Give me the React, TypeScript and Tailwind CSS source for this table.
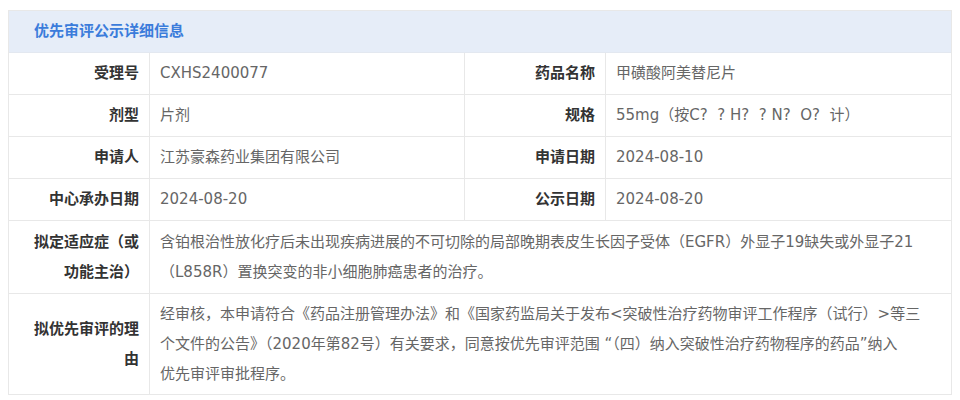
import type { ReactNode } from 'react'

const font = { fontFamily: '"DejaVu Sans", "Noto Sans CJK SC", sans-serif' }

function Label({ children, last, tall }: { children: ReactNode; last?: boolean; tall?: boolean }) {
  return (
    <div
      className={`flex items-center justify-end border-r border-[#e8e8e8] pl-[16px] pr-[10px] text-right text-[15px] font-bold text-[#333] ${tall ? 'leading-[30px]' : 'leading-[29px]'} ${last ? 'py-[5px]' : 'border-b py-[6px]'}`}
    >
      <span>{children}</span>
    </div>
  )
}

function Value({ children, wide, edge, last, tall }: { children: ReactNode; wide?: boolean; edge?: boolean; last?: boolean; tall?: boolean }) {
  return (
    <div
      className={`flex items-center border-[#e8e8e8] px-[10px] text-[15px] text-[#666] ${tall ? 'leading-[30px]' : 'leading-[29px]'} ${wide ? 'col-span-3' : ''} ${edge ? '' : 'border-r'} ${last ? 'py-[5px]' : 'border-b py-[6px]'}`}
    >
      <span>{children}</span>
    </div>
  )
}

export default function App() {
  return (
    <div className="min-h-[400px] bg-white pl-[8px] pt-[10px]" style={font}>
      <div className="w-[944px] border border-[#e8e8e8]">
        <div className="flex h-[42px] items-center border-b border-[#e3e8f0] bg-[#e6edf8] pl-[25px] text-[15px] font-bold text-[#3b7cdb]">
          优先审评公示详细信息
        </div>
        <div className="grid grid-cols-[141px_315px_141px_1fr]">
          <Label>受理号</Label>
          <Value>CXHS2400077</Value>
          <Label>药品名称</Label>
          <Value edge>甲磺酸阿美替尼片</Value>

          <Label>剂型</Label>
          <Value>片剂</Value>
          <Label>规格</Label>
          <Value edge>55mg（按C?&nbsp;&nbsp;?&nbsp;H?&nbsp;&nbsp;?&nbsp;N?&nbsp;&nbsp;O?&nbsp;&nbsp;计）</Value>

          <Label>申请人</Label>
          <Value>江苏豪森药业集团有限公司</Value>
          <Label>申请日期</Label>
          <Value edge>2024-08-10</Value>

          <Label>中心承办日期</Label>
          <Value>2024-08-20</Value>
          <Label>公示日期</Label>
          <Value edge>2024-08-20</Value>

          <Label tall>拟定适应症（或功能主治）</Label>
          <Value wide edge tall>
            含铂根治性放化疗后未出现疾病进展的不可切除的局部晚期表皮生长因子受体（EGFR）外显子19缺失或外显子21
            <br />
            （L858R）置换突变的非小细胞肺癌患者的治疗。
          </Value>

          <Label last tall>拟优先审评的理由</Label>
          <Value wide edge last tall>
            经审核，本申请符合《药品注册管理办法》和《国家药监局关于发布&lt;突破性治疗药物审评工作程序（试行）&gt;等三
            <br />
            个文件的公告》（2020年第82号）有关要求，同意按优先审评范围 “（四）纳入突破性治疗药物程序的药品”纳入
            <br />
            优先审评审批程序。
          </Value>
        </div>
      </div>
    </div>
  )
}
